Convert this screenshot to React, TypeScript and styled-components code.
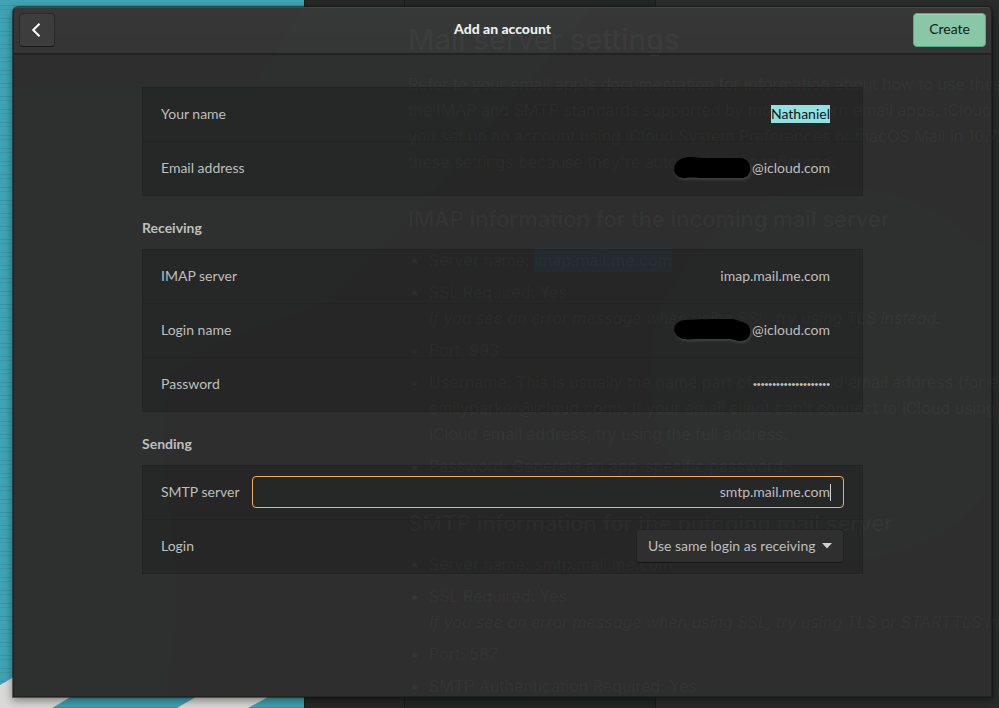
import React from "react";
import styled, { createGlobalStyle } from "styled-components";

const GlobalStyle = createGlobalStyle`
  *, *::before, *::after { box-sizing: border-box; }
  body {
    margin: 0;
    background: #272727;
    font-family: Lato, "Liberation Sans", sans-serif;
    font-size: 14px;
    line-height: 18px;
    color: #bdbfbd;
  }
  button, input, select { font: inherit; color: inherit; }
`;

/* Every layer of the desktop shares the one grid cell. */
const Desktop = styled.main`
  display: grid;
  grid-template: minmax(100vh, auto) / minmax(0, 1fr);
  overflow: hidden;
  > * { grid-area: 1 / 1; min-width: 0; isolation: isolate; }
`;

const Backdrop = styled.div`
  display: grid;
  grid-template-columns: 304px 100px 251px minmax(0, 1fr);
`;

const Wallpaper = styled.div`
  display: flex;
  align-items: flex-end;
  background:
    repeating-linear-gradient(180deg, transparent 0 5px, rgba(20, 70, 80, 0.16) 5px 6px, transparent 6px 9px, rgba(20, 70, 80, 0.1) 9px 10px, transparent 10px 13px),
    #40a3b3;
  svg { display: block; }
`;

const Pane = styled.div<{ $tone: string }>`
  background: ${(p) => p.$tone};
  border-left: 1px solid #1c1c1c;
`;

const dialogBox = `
  margin: 7px 7px 11px 13px;
  border-radius: 5px 5px 0 0;
`;

const Surface = styled.div`
  ${dialogBox}
  position: relative;
  overflow: hidden;
  background: radial-gradient(ellipse 192px 186px at 828px 367px, #2e302f 99%, transparent 100%), #2e2e2e;
  &::before {
    content: "";
    position: absolute;
    inset: 0;
    background: #2e302f;
    clip-path: polygon(0 80px, 240px 80px, 290px 0, 580px 0, 418px 188px, 310px 296px, 200px 338px, 156px 370px, 150px 430px, 164px 580px, 156px 100%, 0 100%);
  }
`;

const Shadow = styled.div`
  ${dialogBox}
  box-shadow: 0 0 0 1px rgba(20, 20, 20, 0.55), 0 3px 9px 1px rgba(0, 0, 0, 0.4);
`;

const Page = styled.article`
  height: 0;
  min-height: 100%;
  overflow: hidden;
  padding: 20px 0 0 408px;
  font: 400 16px/26px Inter, sans-serif;
  color: rgba(255, 255, 255, 0.045);
  white-space: nowrap;
  h1 { margin: 0 0 11px; font-size: 29px; line-height: 40px; font-weight: 500; }
  h2 { margin: 28px 0 12px; font-size: 22px; line-height: 32px; font-weight: 500; }
  p { margin: 0; }
  ul { margin: 0; padding: 0 0 0 21px; display: grid; gap: 6px; }
  mark { padding: 2px 0; color: inherit; background: rgba(40, 90, 160, 0.12); }
  a { color: rgba(70, 130, 200, 0.11); text-decoration: none; }
`;

const Dialog = styled.form`
  ${dialogBox}
  display: flex;
  flex-direction: column;
  overflow: hidden;
  border: 1px solid #222323;
  border-top-color: #464746;
`;

const HeaderBar = styled.header`
  display: grid;
  grid-template-columns: 1fr auto 1fr;
  align-items: center;
  padding: 5px 5px 6px;
  height: 47px;
  background: linear-gradient(rgba(255, 255, 255, 0.045), rgba(255, 255, 255, 0.03));
  border-bottom: 2px solid #212222;
`;

const Title = styled.h1`
  margin: 0;
  padding-bottom: 2px;
  font-size: 14px;
  line-height: 18px;
  font-weight: 900;
  color: #eceeec;
`;

const BackButton = styled.button`
  display: grid;
  place-items: center;
  width: 36px;
  height: 34px;
  padding: 0;
  color: #fff;
  background: #3c3d3c;
  border: 1px solid #292929;
  border-bottom-color: #171717;
  border-radius: 4px;
`;

const CreateButton = styled.button`
  justify-self: end;
  height: 34px;
  padding: 0 15px 2px;
  color: #101c16;
  background: #89c7a8;
  border: 1px solid #4fae83;
  border-radius: 4px;
  box-shadow: inset 0 1px rgba(255, 255, 255, 0.18);
`;

const Content = styled.div`
  width: 100%;
  max-width: 721px;
  margin: 32px auto;
`;

const GroupTitle = styled.h2`
  margin: 23px 0 12px;
  font-size: 14px;
  line-height: 18px;
  font-weight: 700;
`;

const Group = styled.section`
  background: rgba(0, 0, 0, 0.17);
  border: 1px solid #222323;
`;

const Row = styled.div`
  display: flex;
  align-items: center;
  justify-content: space-between;
  gap: 12px;
  height: 54px;
  padding: 0 18px 1px;
  & + & { border-top: 1px solid #222323; }
  &:first-child { height: 53px; }
`;

const Value = styled.div`
  display: flex;
  align-items: center;
  padding-right: 14px;
`;

const TextInput = styled.input<{ $selected?: boolean }>`
  field-sizing: content;
  height: 18px;
  padding: 0;
  border: 0;
  outline: 0;
  text-align: right;
  color: ${(p) => (p.$selected ? "#0b1a1b" : "inherit")};
  background: ${(p) => (p.$selected ? "#92e0e1" : "transparent")};
`;

const PasswordInput = styled(TextInput)`
  font: 400 11px/18px "Liberation Sans", sans-serif;
`;

const FocusedField = styled.div`
  flex: 1;
  min-width: 0;
  display: flex;
  align-items: center;
  height: 32px;
  padding: 0 12px;
  background: #262727;
  border: 1px solid #f4ae5f;
  border-radius: 4px;
  ${TextInput} { flex: 1; min-width: 0; caret-color: transparent; }
`;

const Caret = styled.span`
  width: 1px;
  height: 17px;
  background: #d0d2d0;
`;

const SelectBox = styled.div`
  display: grid;
  align-items: center;
  > * { grid-area: 1 / 1; }
  svg { justify-self: end; margin-right: 12px; pointer-events: none; }
`;

const Select = styled.select`
  appearance: none;
  width: 208px;
  height: 34px;
  padding: 0 24px 0 11px;
  background: #2e2f2e;
  border: 1px solid #222323;
  border-bottom-color: #161616;
  border-radius: 4px;
`;

const Blot = styled.svg`
  display: block;
  overflow: visible;
  margin-right: 2px;
  filter: drop-shadow(1px 2px 1px rgba(90, 90, 90, 0.5));
`;

const blots = {
  email: "M10 1C17 -1 22 1 30 1H67C79 2 80 21 67 21H30C22 21 17 20 12 21C-3 23 -4 4 10 1Z",
  login: "M10 1C25 0 40 0 58 0C63 0 65 3 69 3C80 6 78 22 67 22C61 22 60 20 54 20H22C18 20 15 21 10 20C-3 18 -3 3 10 1Z",
};

const Redaction = ({ shape }: { shape: keyof typeof blots }) => (
  <Blot width="76" height="22" viewBox="0 0 76 22" aria-hidden="true">
    <path d={blots[shape]} fill="#000" />
  </Blot>
);

type FieldProps = { id: string; label: string; children: React.ReactNode };
const Field = ({ id, label, children }: FieldProps) => (
  <Row>
    <label htmlFor={id}>{label}</label>
    {children}
  </Row>
);

const SettingsPage = () => (
  <Page aria-hidden="true">
    <h1>Mail server settings</h1>
    <p>
      Refer to your email app's documentation for information about how to use these settings<br />
      the IMAP and SMTP standards supported by most modern email apps. iCloud<br />
      you set up an account using iCloud System Preferences or macOS Mail in 10.7.4<br />
      these settings because they're automatically configured.
    </p>
    <h2>IMAP information for the incoming mail server</h2>
    <ul>
      <li>Server name: <mark>imap.mail.me.com</mark></li>
      <li>SSL Required: Yes<br /><i>If you see an error message when using SSL, try using TLS instead.</i></li>
      <li>Port: 993</li>
      <li>
        Username: This is usually the name part of your iCloud email address (for example,<br />
        emilyparker@icloud.com). If your email client can't connect to iCloud using<br />
        iCloud email address, try using the full address.
      </li>
      <li>Password: <a href="#password" tabIndex={-1}>Generate an app-specific password.</a></li>
    </ul>
    <h2>SMTP information for the outgoing mail server</h2>
    <ul>
      <li>Server name: smtp.mail.me.com</li>
      <li>SSL Required: Yes<br /><i>If you see an error message when using SSL, try using TLS or STARTTLS instead.</i></li>
      <li>Port: 587</li>
      <li>SMTP Authentication Required: Yes</li>
    </ul>
  </Page>
);

export default function App() {
  return (
    <>
      <GlobalStyle />
      <Desktop>
        <Backdrop>
          <Wallpaper>
            <svg width="304" height="31" viewBox="0 0 304 31" aria-hidden="true">
              <path d="M0 8L14 0H104L52 31H0ZM230 0H304L248 31H177Z" fill="#d9d9d8" />
            </svg>
          </Wallpaper>
          <Pane $tone="#272727" />
          <Pane $tone="#242525" />
          <Pane $tone="#2a2b2b" />
        </Backdrop>
        <Shadow />
        <Surface />
        <SettingsPage />
        <Dialog onSubmit={(e) => e.preventDefault()}>
          <HeaderBar>
            <BackButton type="button" aria-label="Back">
              <svg width="16" height="16" viewBox="0 0 16 16" fill="none" stroke="currentColor" strokeWidth="2">
                <path d="M10.5 1.7L4.2 8L10.5 14.3" />
              </svg>
            </BackButton>
            <Title>Add an account</Title>
            <CreateButton type="submit">Create</CreateButton>
          </HeaderBar>
          <Content>
            <Group>
              <Field id="name" label="Your name">
                <Value><TextInput id="name" $selected defaultValue="Nathaniel" /></Value>
              </Field>
              <Field id="email" label="Email address">
                <Value><Redaction shape="email" /><TextInput id="email" defaultValue="@icloud.com" /></Value>
              </Field>
            </Group>
            <GroupTitle>Receiving</GroupTitle>
            <Group>
              <Field id="imap" label="IMAP server">
                <Value><TextInput id="imap" defaultValue="imap.mail.me.com" /></Value>
              </Field>
              <Field id="login-name" label="Login name">
                <Value><Redaction shape="login" /><TextInput id="login-name" defaultValue="@icloud.com" /></Value>
              </Field>
              <Field id="password" label="Password">
                <Value><PasswordInput id="password" type="password" defaultValue="xxxxxxxxxxxxxxxxxxxx" /></Value>
              </Field>
            </Group>
            <GroupTitle>Sending</GroupTitle>
            <Group>
              <Field id="smtp" label="SMTP server">
                <FocusedField><TextInput id="smtp" defaultValue="smtp.mail.me.com" /><Caret /></FocusedField>
              </Field>
              <Field id="login" label="Login">
                <SelectBox>
                  <Select id="login"><option>Use same login as receiving</option></Select>
                  <svg width="10" height="6" viewBox="0 0 10 6" aria-hidden="true"><path d="M0 0H10L5 5.5Z" fill="#cfd1cf" /></svg>
                </SelectBox>
              </Field>
            </Group>
          </Content>
        </Dialog>
      </Desktop>
    </>
  );
}
